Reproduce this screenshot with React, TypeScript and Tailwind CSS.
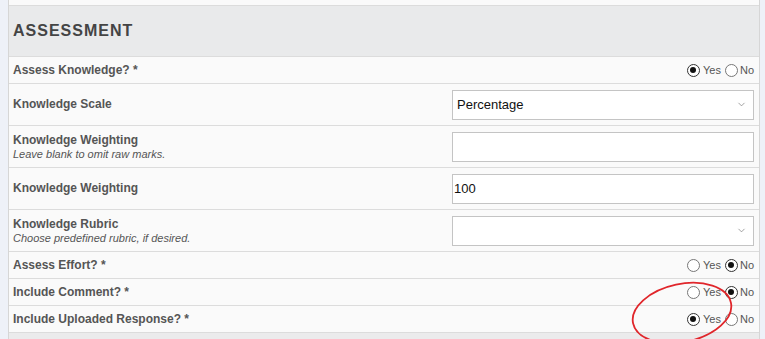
import { ChevronDown } from 'lucide-react';

type Row =
  | { kind: 'radio'; label: string; value: 'yes' | 'no' }
  | { kind: 'select'; label: string; hint?: string; value: string }
  | { kind: 'text'; label: string; hint?: string; value: string };

const rows: Row[] = [
  { kind: 'radio', label: 'Assess Knowledge? *', value: 'yes' },
  { kind: 'select', label: 'Knowledge Scale', value: 'Percentage' },
  { kind: 'text', label: 'Knowledge Weighting', hint: 'Leave blank to omit raw marks.', value: '' },
  { kind: 'text', label: 'Knowledge Weighting', value: '100' },
  { kind: 'select', label: 'Knowledge Rubric', hint: 'Choose predefined rubric, if desired.', value: '' },
  { kind: 'radio', label: 'Assess Effort? *', value: 'no' },
  { kind: 'radio', label: 'Include Comment? *', value: 'no' },
  { kind: 'radio', label: 'Include Uploaded Response? *', value: 'yes' },
];

function Radio({ checked }: { checked: boolean }) {
  return (
    <span
      className={`w-[13px] h-[13px] rounded-full border flex items-center justify-center bg-white ${
        checked ? 'border-[#333]' : 'border-[#777]'
      }`}
    >
      {checked && <span className="w-[6px] h-[6px] rounded-full bg-[#111]" />}
    </span>
  );
}

function YesNo({ value }: { value: 'yes' | 'no' }) {
  return (
    <div className="flex items-center text-[11px] text-[#555] leading-none">
      <Radio checked={value === 'yes'} />
      <span className="ml-[3px] mr-[4px]">Yes</span>
      <Radio checked={value === 'no'} />
      <span className="ml-[2px]">No</span>
    </div>
  );
}

export default function App() {
  return (
    <div
      className="relative w-[765px] h-[339px] overflow-hidden bg-[#eef1f8] pl-[8px] pr-[5px]"
      style={{ fontFamily: '"Liberation Sans", Arial, sans-serif' }}
    >
      <div className="h-full border-l border-r border-[#d6d6d6] bg-[#ebebec] flex flex-col">
        <div className="h-[6px] shrink-0 bg-[#fafafa] border-b border-[#dcdcdc]" />
        <div className="h-[51px] shrink-0 bg-[#e9eaeb] border-b border-[#dcdcdc] flex items-center pl-[4px]">
          <h2 className="text-[16px] font-bold tracking-[1px] text-[#444]">ASSESSMENT</h2>
        </div>

        {rows.map((row, i) => (
          <div
            key={i}
            className={`shrink-0 bg-[#fafafa] border-b border-[#dcdcdc] flex items-center pl-[4px] pr-[5px] ${
              row.kind === 'radio' ? 'h-[27px]' : 'h-[42px]'
            }`}
          >
            <div className="flex-1 flex flex-col">
              <span className="text-[12px] font-bold text-[#555] leading-[15px]">{row.label}</span>
              {'hint' in row && row.hint && (
                <span className="text-[11px] italic text-[#555] leading-[12px]">{row.hint}</span>
              )}
            </div>
            {row.kind === 'radio' && <YesNo value={row.value} />}
            {row.kind === 'select' && (
              <div className="w-[302px] h-[30px] border border-[#c4c4c4] bg-white flex items-center pl-[4px] pr-[6px]">
                <span className="flex-1 text-[13px] text-[#111]">{row.value}</span>
                <ChevronDown size={11} strokeWidth={1.5} className="text-[#777]" />
              </div>
            )}
            {row.kind === 'text' && (
              <div className="w-[302px] h-[30px] border border-[#c4c4c4] bg-white flex items-center pl-[1px]">
                <span className="text-[13px] text-[#111]">{row.value}</span>
              </div>
            )}
          </div>
        ))}
      </div>

      <svg className="absolute left-[620px] top-[270px]" width="130" height="80" viewBox="0 0 130 80">
        <ellipse
          cx="62"
          cy="43"
          rx="50"
          ry="29"
          fill="none"
          stroke="#e0262b"
          strokeWidth="1.8"
          transform="rotate(-12 62 43)"
        />
      </svg>
    </div>
  );
}
